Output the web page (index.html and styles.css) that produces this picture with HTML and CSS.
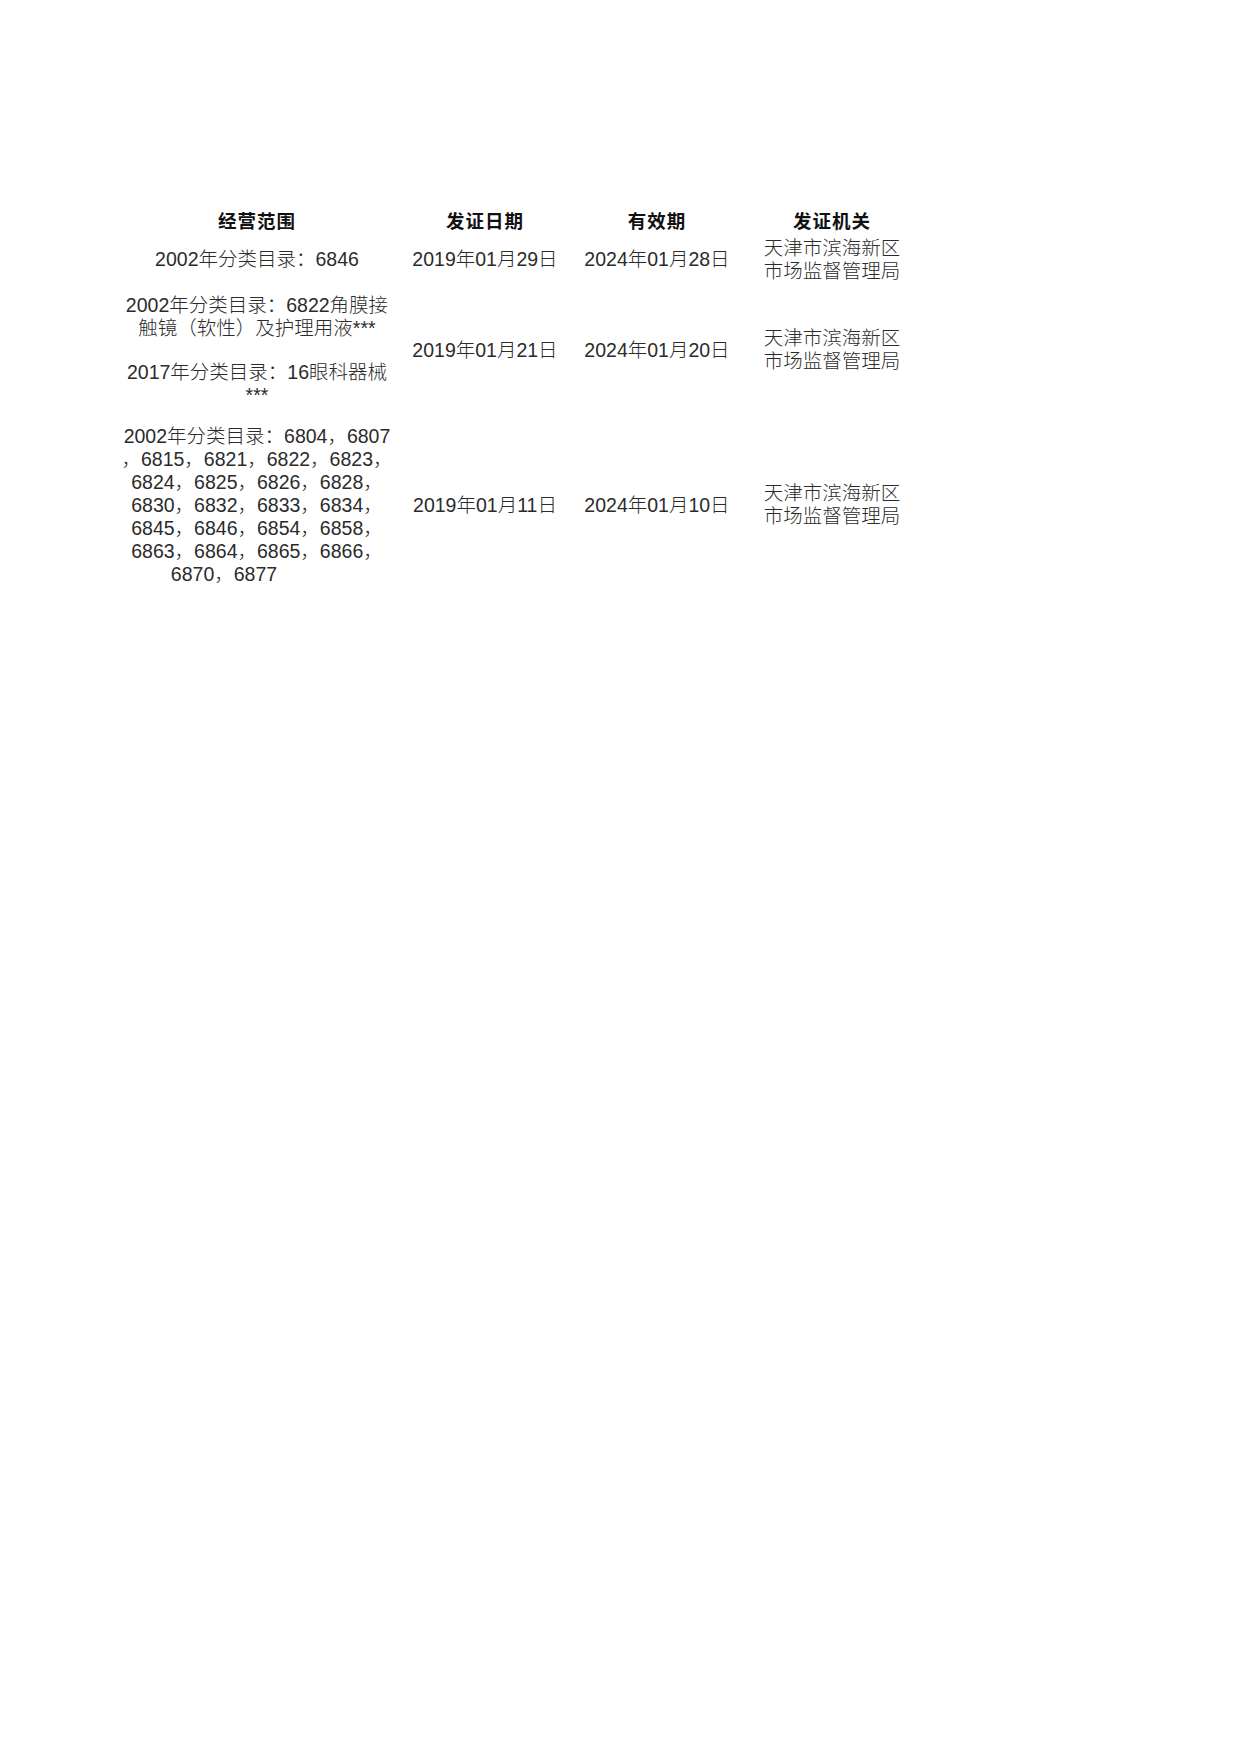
FILE: index.html
```html
<!DOCTYPE html>
<html lang="zh-CN">
<head>
<meta charset="utf-8">
<title>经营范围</title>
<link rel="stylesheet" href="styles.css">
</head>
<body>
<div class="page">
  <div class="sheet">
    <div class="cell head">经营范围</div>
    <div class="cell head">发证日期</div>
    <div class="cell head">有效期</div>
    <div class="cell head">发证机关</div>

    <div class="cell"><div class="entry">2002年分类目录：6846</div></div>
    <div class="cell">2019年01月29日</div>
    <div class="cell">2024年01月28日</div>
    <div class="cell"><div class="entry">天津市滨海新区<br>市场监督管理局</div></div>

    <div class="cell stack">
      <div class="entry">2002年分类目录：6822角膜接<br>触镜（软性）及护理用液***</div>
      <div class="entry">2017年分类目录：16眼科器械<br>***</div>
    </div>
    <div class="cell">2019年01月21日</div>
    <div class="cell">2024年01月20日</div>
    <div class="cell"><div class="entry">天津市滨海新区<br>市场监督管理局</div></div>

    <div class="cell">
      <div class="entry">
        <div>2002年分类目录：6804，6807</div>
        <div>，6815，6821，6822，6823，</div>
        <div>6824，6825，6826，6828，</div>
        <div>6830，6832，6833，6834，</div>
        <div>6845，6846，6854，6858，</div>
        <div>6863，6864，6865，6866，</div>
        <div class="tail">6870，6877</div>
      </div>
    </div>
    <div class="cell">2019年01月11日</div>
    <div class="cell">2024年01月10日</div>
    <div class="cell"><div class="entry">天津市滨海新区<br>市场监督管理局</div></div>
  </div>
</div>
</body>
</html>
```
FILE: styles.css
```css
html, body {
  margin: 0;
  padding: 0;
  background: #ffffff;
}

body {
  font-family: "Liberation Sans", "Noto Sans CJK SC", sans-serif;
  color: #2b2b2b;
}

.page {
  width: 1241px;
  min-height: 1754px;
  padding: 208px 0 0 113px;
  box-sizing: border-box;
}

.sheet {
  display: grid;
  grid-template-columns: 288px 168px 176px 174px;
  grid-template-rows: 26px 51px 130px 180px;
  align-items: center;
  justify-items: center;
  text-align: center;
}

.cell {
  font-size: 19.5px;
  line-height: 23px;
  font-weight: 300;
  white-space: nowrap;
}

.head {
  font-size: 18.5px;
  font-weight: 700;
  letter-spacing: 1px;
  color: #111111;
}

.stack {
  display: flex;
  flex-direction: column;
  gap: 21px;
}

.tail {
  padding-right: 66px;
}
```
